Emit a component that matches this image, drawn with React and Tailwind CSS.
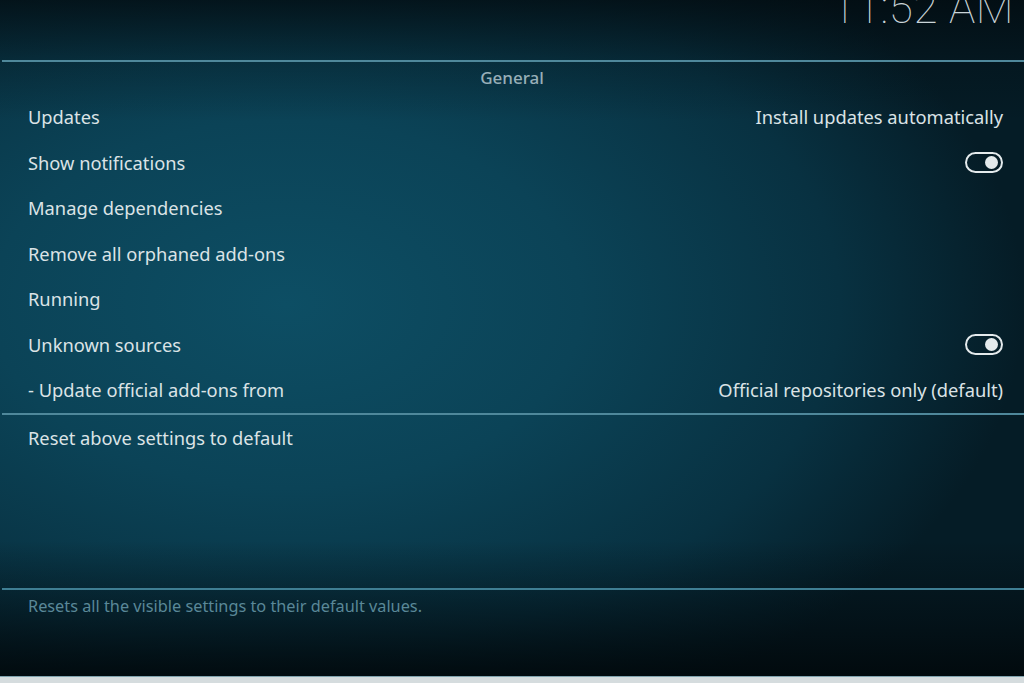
import React from "react";

function Toggle() {
  return (
    <div className="w-[38px] h-[21px] rounded-full border-[2.5px] border-[#e4eaec] flex items-center justify-end pr-[3px]">
      <div className="w-[13px] h-[13px] rounded-full bg-[#e4eaec]" />
    </div>
  );
}

const rows = [
  { label: "Updates", value: "Install updates automatically" },
  { label: "Show notifications", toggle: true },
  { label: "Manage dependencies" },
  { label: "Remove all orphaned add-ons" },
  { label: "Running" },
  { label: "Unknown sources", toggle: true },
  { label: "- Update official add-ons from", value: "Official repositories only (default)" },
];

export default function App() {
  return (
    <div
      className="w-[1024px] h-[683px] flex flex-col overflow-hidden"
      style={{ fontFamily: '"Noto Sans", "Open Sans", sans-serif' }}
    >
      <div className="relative h-[676px] flex flex-col bg-[radial-gradient(ellipse_72%_68%_at_28%_45%,#0d4e64_0%,#0b4357_40%,#083141_75%,#051c26_100%)]">
        <div className="pointer-events-none absolute inset-0 bg-[linear-gradient(to_bottom,rgba(2,10,14,0.75)_0%,rgba(2,10,14,0.25)_9%,rgba(2,10,14,0)_18%,rgba(2,10,14,0)_80%,rgba(2,10,14,0.55)_92%,rgba(1,8,11,0.9)_100%)]" />
        <div className="relative flex flex-col h-full">
          <div className="h-[60px] flex justify-end pr-[10px]">
            <div
              className="text-[44px] leading-none text-[#c9d4d8] font-thin -mt-[14px] tracking-[0.5px]"
              style={{ fontFamily: "Roboto, sans-serif" }}
            >
              11:52 AM
            </div>
          </div>
          <div className="h-[2px] ml-[2px] bg-[#4f889b]" />
          <div className="h-[32px] flex items-center justify-center text-[17px] font-medium text-[#98afb8]">
            General
          </div>
          <div className="flex flex-col">
            {rows.map((r) => (
              <div
                key={r.label}
                className="h-[45.5px] flex items-center justify-between pl-[28px] pr-[21px] text-[18.3px] text-[#dbe3e6]"
              >
                <span>{r.label}</span>
                {r.value && <span>{r.value}</span>}
                {r.toggle && <Toggle />}
              </div>
            ))}
          </div>
          <div className="h-[2px] ml-[2px] bg-[#4f889b]" />
          <div className="h-[46px] flex items-center pl-[28px] text-[18.3px] text-[#dbe3e6]">
            Reset above settings to default
          </div>
          <div className="flex-1" />
          <div className="h-[2px] ml-[2px] bg-[#3f7e93]" />
          <div className="h-[86px] pl-[28px] pt-[4px] text-[16.3px] text-[#5a8898]">
            Resets all the visible settings to their default values.
          </div>
        </div>
      </div>
      <div className="h-[7px] bg-[#d5dcde] border-t border-[#7fa2ad]" />
    </div>
  );
}
